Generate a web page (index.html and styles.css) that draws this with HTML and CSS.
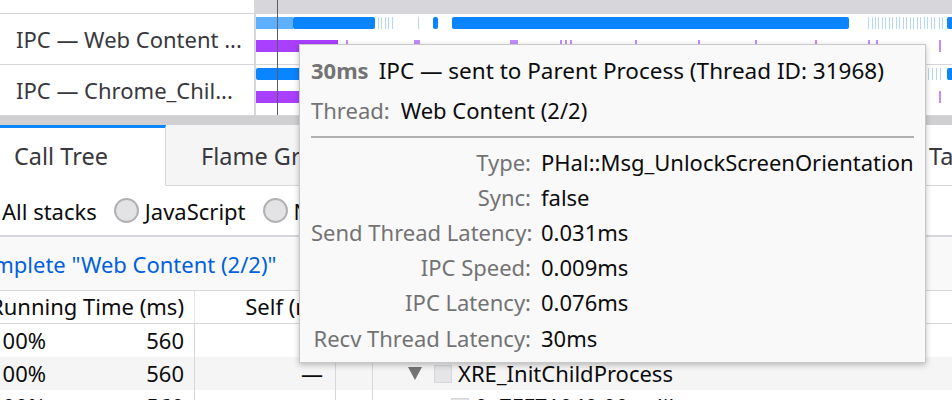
FILE: index.html
```html
<!DOCTYPE html>
<html>
<head>
<meta charset="utf-8">
<link rel="stylesheet" href="styles.css">
</head>
<body>
<div class="page">
  <section class="timeline">
    <div class="tl-row tl-head">
      <div class="tl-label"></div>
      <div class="tl-graph tl-axis"></div>
    </div>
    <div class="tl-row track">
      <div class="tl-label">IPC — Web Content ...</div>
      <div class="tl-graph">
        <div class="lane lane-top">
          <span class="bar light" style="left:0;width:37px"></span>
          <span class="bar" style="left:37px;width:82px"></span>
          <span class="tick" style="left:122px"></span>
          <span class="tick" style="left:125px"></span>
          <span class="tick" style="left:129px"></span>
          <span class="tick" style="left:132px"></span>
          <span class="tick" style="left:136px"></span>
          <span class="tick" style="left:162px"></span>
          <span class="bar" style="left:177px;width:5px"></span>
          <span class="bar" style="left:196px;width:397px"></span>
          <span class="tick" style="left:612px"></span>
          <span class="tick" style="left:616px"></span>
          <span class="tick" style="left:619px"></span>
          <span class="tick" style="left:622px"></span>
          <span class="tick" style="left:626px"></span>
          <span class="tick" style="left:629px"></span>
          <span class="tick" style="left:633px"></span>
          <span class="tick" style="left:636px"></span>
          <span class="tick" style="left:640px"></span>
          <span class="tick" style="left:643px"></span>
          <span class="tick" style="left:647px"></span>
          <span class="tick" style="left:650px"></span>
          <span class="tick" style="left:654px"></span>
          <span class="tick" style="left:657px"></span>
          <span class="tick" style="left:661px"></span>
          <span class="tick" style="left:664px"></span>
          <span class="tick" style="left:668px"></span>
          <span class="tick" style="left:671px"></span>
          <span class="tick" style="left:675px"></span>
          <span class="tick" style="left:678px"></span>
          <span class="tick" style="left:683px"></span>
          <span class="tick" style="left:686px"></span>
          <span class="bar" style="left:691px;width:10px"></span>
        </div>
        <div class="lane lane-bottom">
          <span class="bar purple" style="left:0;width:82px"></span>
          <span class="ptick" style="left:90px"></span>
          <span class="ptick" style="left:158px;width:6px"></span>
          <span class="ptick" style="left:254px;width:8px"></span>
          <span class="ptick" style="left:304px"></span>
          <span class="ptick" style="left:309px"></span>
          <span class="ptick" style="left:314px"></span>
          <span class="ptick" style="left:379px"></span>
          <span class="ptick" style="left:442px"></span>
          <span class="ptick" style="left:499px"></span>
          <span class="ptick" style="left:559px"></span>
          <span class="ptick" style="left:612px"></span>
          <span class="ptick" style="left:620px"></span>
          <span class="ptick" style="left:683px"></span>
        </div>
      </div>
    </div>
    <div class="tl-row track">
      <div class="tl-label">IPC — Chrome_Chil...</div>
      <div class="tl-graph">
        <div class="lane lane-top">
          <span class="bar" style="left:0;width:60px"></span>
          <span class="tick" style="left:672px"></span>
          <span class="tick" style="left:676px"></span>
          <span class="tick" style="left:680px"></span>
          <span class="tick" style="left:684px"></span>
          <span class="bar" style="left:691px;width:10px"></span>
        </div>
        <div class="lane lane-bottom">
          <span class="bar purple" style="left:0;width:60px"></span>
          <span class="ptick" style="left:683px"></span>
        </div>
      </div>
    </div>
    <div class="cursor"></div>
  </section>
  <div class="splitter"></div>
  <section class="details">
    <nav class="tabs">
      <div class="tab selected">Call Tree</div>
      <div class="tab">Flame Graph</div>
      <div class="tab">Stack Chart</div>
      <div class="tab">Marker Chart</div>
      <div class="tab">Marker Table</div>
    </nav>
    <div class="stack-opts">
      <label class="opt"><span class="radio checked"></span>All stacks</label>
      <label class="opt"><span class="radio"></span>JavaScript</label>
      <label class="opt"><span class="radio"></span>Native</label>
    </div>
    <div class="crumbs"><span class="crumb">Complete "Web Content (2/2)"</span></div>
    <div class="tree">
      <div class="tree-head">
        <div class="c-run">Running Time (ms)</div>
        <div class="c-self">Self (ms)</div>
        <div class="c-icon"></div>
        <div class="c-name"></div>
      </div>
      <div class="tree-row">
        <div class="c-run"><span class="pct">100%</span><span>560</span></div>
        <div class="c-self"></div>
        <div class="c-icon"></div>
        <div class="c-name"><span class="twisty"></span><span class="box"></span>(root)</div>
      </div>
      <div class="tree-row odd">
        <div class="c-run"><span class="pct">100%</span><span>560</span></div>
        <div class="c-self">—</div>
        <div class="c-icon"></div>
        <div class="c-name lvl1"><span class="twisty"></span><span class="box"></span>XRE_InitChildProcess</div>
      </div>
      <div class="tree-row">
        <div class="c-run"><span class="pct">100%</span><span>560</span></div>
        <div class="c-self">—</div>
        <div class="c-icon"></div>
        <div class="c-name lvl2"><span class="twisty"></span><span class="box"></span>0x7FF71040 00 calibrate</div>
      </div>
    </div>
  </section>

  <div class="tooltip">
    <div class="tt-title"><span class="tt-dur">30ms</span>IPC — sent to Parent Process (Thread ID: 31968)</div>
    <div class="tt-thread"><span class="tt-label">Thread:</span>Web Content (2/2)</div>
    <div class="tt-rule"></div>
    <div class="tt-grid">
      <div class="tt-k">Type:</div><div class="tt-v">PHal::Msg_UnlockScreenOrientation</div>
      <div class="tt-k">Sync:</div><div class="tt-v">false</div>
      <div class="tt-k">Send Thread Latency:</div><div class="tt-v">0.031ms</div>
      <div class="tt-k">IPC Speed:</div><div class="tt-v">0.009ms</div>
      <div class="tt-k">IPC Latency:</div><div class="tt-v">0.076ms</div>
      <div class="tt-k">Recv Thread Latency:</div><div class="tt-v">30ms</div>
    </div>
  </div>
</div>
</body>
</html>
```

FILE: styles.css
```css
* { box-sizing: border-box; }
html, body { margin: 0; padding: 0; background: #fff; }
body {
  font-family: "Noto Sans", "Open Sans", sans-serif;
  color: #0c0c0d;
  width: 952px;
  height: 400px;
  overflow: hidden;
}
.page { position: relative; width: 952px; height: 400px; overflow: hidden; }

/* ---------- timeline ---------- */
.timeline { position: relative; }
.tl-row { display: flex; border-bottom: 1px solid #d7d7db; }
.tl-head { height: 14px; }
.track { height: 51px; }
.tl-label {
  width: 256px;
  flex: none;
  border-right: 2px solid #d7d7db;
  background: #fff;
  font-size: 22px;
  color: #38383d;
  padding-left: 16px;
  line-height: 50px;
  white-space: nowrap;
  overflow: hidden;
}
.tl-graph { flex: 1; position: relative; background: #fff; }
.tl-axis { background: #d7d7db; }
.lane { position: absolute; left: 0; right: 0; height: 12px; }
.lane-top { top: 3px; }
.lane-bottom { top: 26px; }
.bar { position: absolute; top: 0; height: 12px; background: #0a84ff; border-radius: 2px; }
.bar.light { background: #5eb0ff; border-radius: 0; }
.bar.purple { background: #a93fff; border-radius: 0; }
.tick { position: absolute; top: 0; height: 12px; width: 1px; background: #b3d6fd; }
.ptick { position: absolute; top: 0; height: 12px; width: 2px; background: #c48cff; }
.cursor { position: absolute; left: 277px; top: 0; width: 1px; height: 115px; background: #5c5c61; }

.splitter { height: 9px; background: #d0d0d3; }

/* ---------- details ---------- */
.details { font-size: 22px; }
.tabs {
  display: flex;
  height: 61px;
  background: #f9f9fa;
  white-space: nowrap;
  font-size: 23.5px;
}
.tab {
  flex: none;
  padding: 0 35px;
  line-height: 56px;
  color: #38383d;
  background: #f5f5f5;
  border-bottom: 1px solid #d7d7db;
  border-right: 1px solid #d7d7db;
  border-top: 3px solid transparent;
}
.tab:last-child { padding-left: 51px; background: #fff; }
.tab.selected {
  width: 166px;
  padding-left: 14px;
  background: #fff;
  border-top-color: #0a84ff;
  border-bottom-color: #fff;
}
.stack-opts {
  display: flex;
  align-items: center;
  height: 51px;
  border-bottom: 2px solid #d7d7db;
  background: #fff;
  white-space: nowrap;
}
.opt { display: flex; align-items: center; margin-right: 17px; }
.opt:first-child { margin-left: -29px; }
.radio {
  width: 25px; height: 25px;
  border-radius: 50%;
  border: 2px solid #b1b1b3;
  background: #e3e3e5;
  margin-right: 6px;
  flex: none;
}
.radio.checked { border: 8px solid #0a84ff; background: #fff; }
.crumbs {
  height: 54px;
  background: #f9f9fa;
  border-bottom: 1px solid #d7d7db;
  line-height: 54px;
  white-space: nowrap;
}
.crumb { color: #0060df; margin-left: -34px; }

.tree { background: #fff; }
.tree-head, .tree-row { display: flex; white-space: nowrap; }
.tree-head { height: 33px; line-height: 31px; border-bottom: 1px solid #d7d7db; }
.tree-row { height: 33px; line-height: 33px; }
.tree-row.odd { background: #f5f5f5; }
.c-run {
  width: 195px; flex: none;
  border-right: 1px solid #d7d7db;
  display: flex; justify-content: space-between;
  padding-right: 10px;
}
.tree-head .c-run { justify-content: flex-end; border-right-color: #e7e7e9; }
.pct { margin-left: -10px; }
.c-self { width: 141px; flex: none; border-right: 1px solid #d7d7db; text-align: right; padding-right: 12px; }
.tree-head .c-self { padding-right: 2px; }
.c-icon { width: 37px; flex: none; border-right: 1px solid #d7d7db; }
.tree-head .c-icon, .tree-head .c-self { border-right-color: transparent; }
.c-name { flex: 1; display: flex; align-items: center; padding-left: 35px; }
.c-name.lvl1 { padding-left: 35px; }
.c-name.lvl2 { padding-left: 52px; }
.twisty {
  width: 0; height: 0;
  border-left: 7px solid transparent;
  border-right: 7px solid transparent;
  border-top: 13px solid #737373;
  margin-right: 12px;
}
.box { width: 18px; height: 18px; background: #e5e5e7; border: 1px solid #d7d7db; margin-right: 6px; }

/* ---------- tooltip ---------- */
.tooltip {
  position: absolute;
  left: 299px; top: 44px;
  width: 627px; height: 319px;
  background: #f9f9fa;
  border: 1px solid #c8c8cb;
  box-shadow: 0 2px 6px rgba(0,0,0,0.25);
  padding: 8px 11px 0 11px;
  font-size: 22px;
  white-space: nowrap;
}
.tt-title { line-height: 35px; font-size: 22.5px; }
.tt-dur { font-weight: bold; color: #737373; margin-right: 10px; font-size: 22px; }
.tt-thread { line-height: 35px; margin-top: 5px; }
.tt-label { color: #737373; margin-right: 11px; }
.tt-rule { height: 2px; background: #b1b1b3; margin: 8px 0 6px; }
.tt-grid {
  display: grid;
  grid-template-columns: 220px 1fr;
  column-gap: 10px;
  grid-auto-rows: 35.2px;
  align-items: center;
}
.tt-k { text-align: right; color: #737373; }
.tt-v { color: #0c0c0d; }
```
